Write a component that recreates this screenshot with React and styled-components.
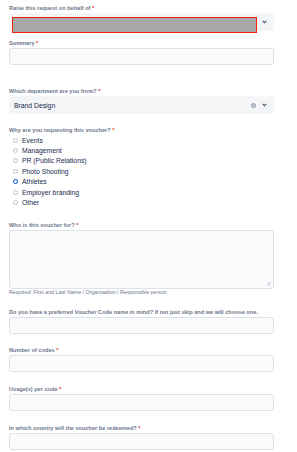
import React from 'react';
import styled, { createGlobalStyle } from 'styled-components';

const GlobalStyle = createGlobalStyle`
  html, body {
    margin: 0;
    padding: 0;
    background: #ffffff;
    font-family: "Liberation Sans", Arial, sans-serif;
    color: #172b4d;
  }
`;

const reasons = [
  'Events',
  'Management',
  'PR (Public Relations)',
  'Photo Shooting',
  'Athletes',
  'Employer branding',
  'Other',
];

function Chevron() {
  return (
    <svg width="5" height="4" viewBox="0 0 5 4">
      <path d="M0.7 0.9 L2.5 2.7 L4.3 0.9" fill="none" stroke="#42526e" strokeWidth="1.2" />
    </svg>
  );
}

function ClearIcon() {
  return (
    <svg width="5" height="5" viewBox="0 0 6 6">
      <circle cx="3" cy="3" r="3" fill="#a5adba" />
      <path d="M1.9 1.9 L4.1 4.1 M4.1 1.9 L1.9 4.1" stroke="#f4f5f7" strokeWidth="0.8" />
    </svg>
  );
}

function App() {
  return (
    <>
      <GlobalStyle />
      <Form>
        <Field $after={8}>
          <Label>
            Raise this request on behalf of <Req>*</Req>
          </Label>
          <Select>
            <Redacted />
            <Icons>
              <Chevron />
            </Icons>
          </Select>
        </Field>

        <Field $after={22}>
          <Label>
            Summary <Req>*</Req>
          </Label>
          <Input />
        </Field>

        <Field $after={12}>
          <Label>
            Which department are you from? <Req>*</Req>
          </Label>
          <Select>
            <SelectValue>Brand Design</SelectValue>
            <Icons>
              <ClearIcon />
              <Chevron />
            </Icons>
          </Select>
        </Field>

        <Field $after={13}>
          <Label>
            Why are you requesting this voucher? <Req>*</Req>
          </Label>
          <RadioList>
            {reasons.map((r) => (
              <RadioRow key={r}>
                <Radio $checked={r === 'Athletes'} />
                <RadioText>{r}</RadioText>
              </RadioRow>
            ))}
          </RadioList>
        </Field>

        <Field $after={12}>
          <Label>
            Who is this voucher for? <Req>*</Req>
          </Label>
          <TextArea>
            <Grip>
              <svg width="5" height="5" viewBox="0 0 5 5">
                <path d="M4.5 0.8 L0.8 4.5 M4.5 2.8 L2.8 4.5" stroke="#7a869a" strokeWidth="0.6" />
              </svg>
            </Grip>
          </TextArea>
          <Help>Required: First and Last Name / Organisation / Responsible person</Help>
        </Field>

        <Field $after={12}>
          <Label>
            Do you have a preferred Voucher Code name in mind? If not just skip and we will choose one.
          </Label>
          <Input />
        </Field>

        <Field $after={13}>
          <Label>
            Number of codes <Req>*</Req>
          </Label>
          <Input />
        </Field>

        <Field $after={13}>
          <Label>
            Usage(s) per code <Req>*</Req>
          </Label>
          <Input />
        </Field>

        <Field $after={13}>
          <Label>
            In which country will the voucher be redeemed? <Req>*</Req>
          </Label>
          <Input />
        </Field>
      </Form>
    </>
  );
}

const Form = styled.div`
  display: flex;
  flex-direction: column;
  width: 265px;
  padding: 4px 0 0 9px;
`;

const Field = styled.div`
  display: flex;
  flex-direction: column;
  margin-bottom: ${(p) => p.$after}px;
`;

const Label = styled.div`
  font-size: 5.6px;
  line-height: 8px;
  font-weight: 700;
  color: #6b778c;
  margin-bottom: 1px;
  white-space: nowrap;
`;

const Req = styled.span`
  color: #de350b;
`;

const Select = styled.div`
  position: relative;
  display: flex;
  align-items: center;
  height: 18px;
  background: #f4f5f7;
  border-radius: 3px;
  padding: 0 7px 0 5px;
`;

const Redacted = styled.div`
  position: absolute;
  top: 4px;
  left: 3px;
  width: 245px;
  height: 16px;
  box-sizing: border-box;
  background: #a8a8a8;
  border: 1.5px solid #f4200c;
`;

const SelectValue = styled.span`
  flex: 1;
  font-size: 6.8px;
  color: #172b4d;
`;

const Icons = styled.div`
  margin-left: auto;
  display: flex;
  align-items: center;
  gap: 6px;
`;

const Input = styled.div`
  height: 17px;
  box-sizing: border-box;
  background: #fafbfc;
  border: 1px solid #dfe1e6;
  border-radius: 3px;
`;

const RadioList = styled.div`
  display: flex;
  flex-direction: column;
  padding-left: 4px;
`;

const RadioRow = styled.div`
  display: flex;
  align-items: center;
  height: 10.4px;
  gap: 4px;
`;

const Radio = styled.span`
  width: 5px;
  height: 5px;
  border-radius: 50%;
  box-sizing: border-box;
  background: ${(p) => (p.$checked ? '#ffffff' : '#fafbfc')};
  border: ${(p) => (p.$checked ? '1.6px solid #0052cc' : '0.8px solid #c1c7d0')};
`;

const RadioText = styled.span`
  font-size: 6.8px;
  color: #172b4d;
`;

const TextArea = styled.div`
  position: relative;
  height: 59px;
  box-sizing: border-box;
  background: #fafbfc;
  border: 1px solid #dfe1e6;
  border-radius: 3px;
`;

const Grip = styled.div`
  position: absolute;
  right: 2px;
  bottom: 2px;
  display: flex;
`;

const Help = styled.div`
  font-size: 5.3px;
  line-height: 7px;
  color: #6b778c;
  white-space: nowrap;
`;

export default App;
